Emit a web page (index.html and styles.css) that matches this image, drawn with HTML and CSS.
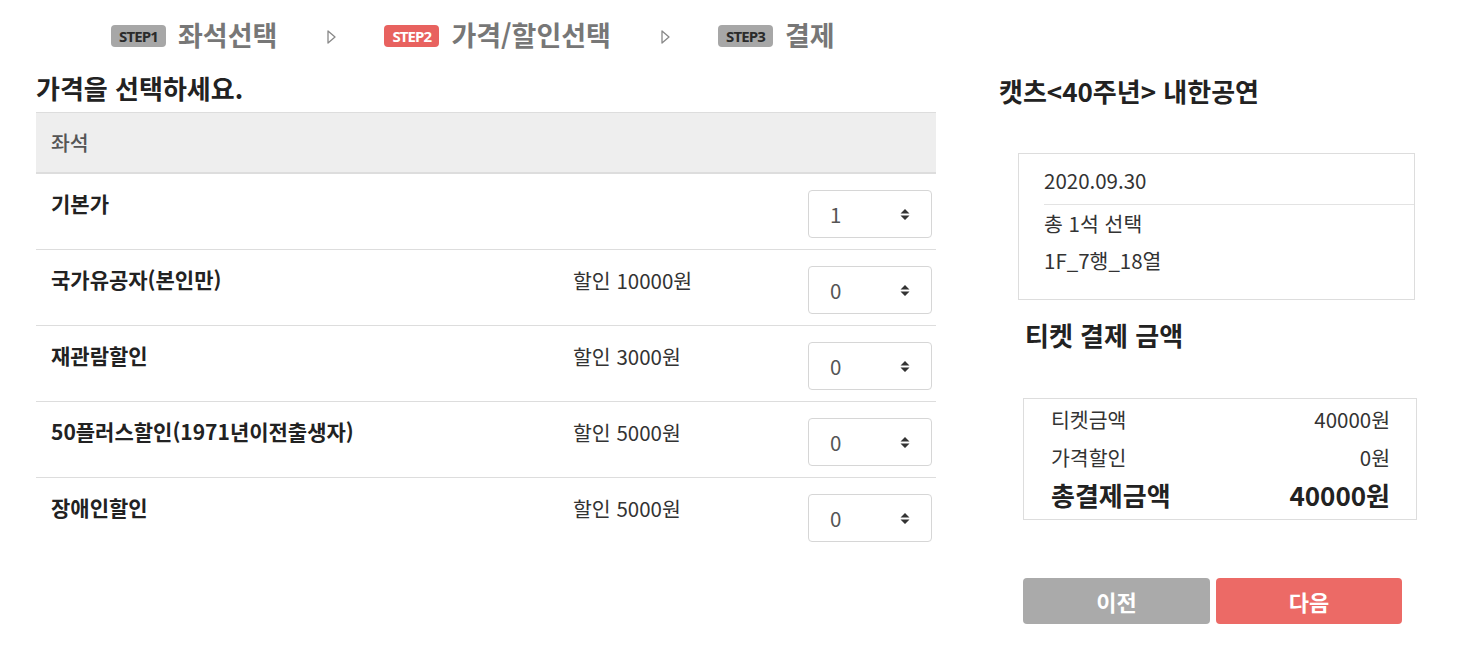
FILE: index.html
```html
<!DOCTYPE html>
<html lang="ko">
<head>
<meta charset="utf-8">
<title>가격/할인선택</title>
<link rel="stylesheet" href="styles.css">
</head>
<body>
<div class="stepbar">
  <div class="step"><span class="badge">STEP1</span><span class="step-text">좌석선택</span></div>
  <span class="arrow"><svg width="9" height="14" viewBox="0 0 9 14"><path d="M1 1 L8 7 L1 13 Z" fill="none" stroke="#888" stroke-width="1.3" stroke-linejoin="round"/></svg></span>
  <div class="step"><span class="badge badge-active">STEP2</span><span class="step-text">가격/할인선택</span></div>
  <span class="arrow"><svg width="9" height="14" viewBox="0 0 9 14"><path d="M1 1 L8 7 L1 13 Z" fill="none" stroke="#888" stroke-width="1.3" stroke-linejoin="round"/></svg></span>
  <div class="step"><span class="badge">STEP3</span><span class="step-text">결제</span></div>
</div>

<div class="main">
  <section class="left">
    <h2 class="heading">가격을 선택하세요.</h2>
    <div class="table">
      <div class="thead">좌석</div>
      <div class="row">
        <div class="label">기본가</div>
        <div class="disc"></div>
        <div class="select"><span>1</span><svg width="10" height="13" viewBox="0 0 10 13"><path d="M5 1 L9.5 5.5 L0.5 5.5 Z M5 12 L9.5 7.5 L0.5 7.5 Z" fill="#333"/></svg></div>
      </div>
      <div class="row">
        <div class="label">국가유공자(본인만)</div>
        <div class="disc">할인 10000원</div>
        <div class="select"><span>0</span><svg width="10" height="13" viewBox="0 0 10 13"><path d="M5 1 L9.5 5.5 L0.5 5.5 Z M5 12 L9.5 7.5 L0.5 7.5 Z" fill="#333"/></svg></div>
      </div>
      <div class="row">
        <div class="label">재관람할인</div>
        <div class="disc">할인 3000원</div>
        <div class="select"><span>0</span><svg width="10" height="13" viewBox="0 0 10 13"><path d="M5 1 L9.5 5.5 L0.5 5.5 Z M5 12 L9.5 7.5 L0.5 7.5 Z" fill="#333"/></svg></div>
      </div>
      <div class="row">
        <div class="label">50플러스할인(1971년이전출생자)</div>
        <div class="disc">할인 5000원</div>
        <div class="select"><span>0</span><svg width="10" height="13" viewBox="0 0 10 13"><path d="M5 1 L9.5 5.5 L0.5 5.5 Z M5 12 L9.5 7.5 L0.5 7.5 Z" fill="#333"/></svg></div>
      </div>
      <div class="row last">
        <div class="label">장애인할인</div>
        <div class="disc">할인 5000원</div>
        <div class="select"><span>0</span><svg width="10" height="13" viewBox="0 0 10 13"><path d="M5 1 L9.5 5.5 L0.5 5.5 Z M5 12 L9.5 7.5 L0.5 7.5 Z" fill="#333"/></svg></div>
      </div>
    </div>
  </section>

  <aside class="right">
    <h2 class="title">캣츠&lt;40주년&gt; 내한공연</h2>
    <div class="info">
      <div class="date">2020.09.30</div>
      <div class="seats">
        <div>총 1석 선택</div>
        <div>1F_7행_18열</div>
      </div>
    </div>
    <h2 class="pay-title">티켓 결제 금액</h2>
    <div class="price">
      <div class="price-row"><span>티켓금액</span><span>40000원</span></div>
      <div class="price-row"><span>가격할인</span><span>0원</span></div>
      <div class="price-row total"><span>총결제금액</span><span>40000원</span></div>
    </div>
    <div class="buttons">
      <button class="btn btn-prev">이전</button>
      <button class="btn btn-next">다음</button>
    </div>
  </aside>
</div>
</body>
</html>
```

FILE: styles.css
```css
* { box-sizing: border-box; }
html, body { margin: 0; padding: 0; background: #fff; }
body {
  font-family: "Noto Sans CJK KR", sans-serif;
  font-size: 20.5px;
  color: #333;
}
h2 { margin: 0; }

.stepbar {
  height: 72px;
  display: flex;
  align-items: center;
  padding-left: 111px;
}
.step { display: flex; align-items: center; gap: 12px; }
.badge {
  display: inline-block;
  width: 55px;
  height: 22px;
  line-height: 22px;
  border-radius: 4px;
  background: #a7a7a7;
  color: #2b2b2b;
  font-family: "Open Sans", "Noto Sans", sans-serif;
  font-weight: 700;
  font-size: 15px;
  text-align: center;
  letter-spacing: -0.9px;
}
.badge-active { background: #e8625f; color: #fff; }
.step-text {
  font-weight: 700;
  font-size: 27px;
  color: #777;
  line-height: 30px;
  margin-top: -3px;
}
.arrow { display: flex; margin: 2px 48px 0 50px; }

.main { display: flex; align-items: flex-start; }
.left { width: 900px; margin-left: 36px; }
.heading {
  font-size: 26px;
  font-weight: 700;
  color: #222;
  line-height: 32px;
  margin-top: 0;
  margin-bottom: 8px;
}
.table { width: 900px; }
.thead {
  height: 62px;
  background: #eee;
  border-top: 1px solid #ddd;
  border-bottom: 2px solid #ddd;
  padding-left: 15px;
  line-height: 59px;
  font-weight: 500;
  color: #555;
}
.row {
  display: grid;
  grid-template-columns: 522px 1fr 124px;
  align-items: start;
  height: 76px;
  padding: 16px 4px 12px 15px;
  border-bottom: 1px solid #ddd;
}
.row.last { border-bottom: none; }
.label {
  font-size: 21px;
  font-weight: 700;
  color: #222;
  line-height: 26px;
  padding-top: 0;
}
.disc { line-height: 26px; padding-top: 1px; color: #333; }
.select {
  height: 48px;
  border: 1px solid #d6d6d6;
  border-radius: 4px;
  display: flex;
  align-items: center;
  justify-content: space-between;
  padding: 0 21px 0 21px;
  color: #555;
}

.right { margin-left: 63px; width: 420px; }
.title {
  font-size: 26px;
  font-weight: 700;
  color: #222;
  line-height: 32px;
  margin-top: 3px;
}
.info {
  margin-top: 46px;
  margin-left: 19px;
  width: 397px;
  border: 1px solid #ddd;
  padding-left: 25px;
}
.date { padding: 13px 0 11px; line-height: 26px; }
.seats { border-top: 1px solid #e3e3e3; padding-bottom: 20px; }
.seats div { line-height: 38px; margin-top: -1px; }
.pay-title {
  font-size: 26px;
  font-weight: 700;
  color: #222;
  line-height: 32px;
  margin-top: 19px;
  margin-left: 26px;
}
.price {
  margin-top: 47px;
  margin-left: 24px;
  width: 394px;
  border: 1px solid #ddd;
  padding: 1px 26px 5px 27px;
}
.price-row {
  display: flex;
  justify-content: space-between;
  line-height: 38px;
}
.price-row.total {
  font-size: 26px;
  font-weight: 700;
  color: #222;
}
.buttons {
  margin-top: 58px;
  margin-left: 24px;
  display: flex;
  gap: 6px;
}
.btn {
  height: 46px;
  border: none;
  border-radius: 4px;
  color: #fff;
  font-family: "Noto Sans CJK KR", sans-serif;
  font-size: 22px;
  font-weight: 700;
}
.btn-prev { width: 187px; background: #aaa; }
.btn-next { width: 186px; background: #ec6a66; }
```
